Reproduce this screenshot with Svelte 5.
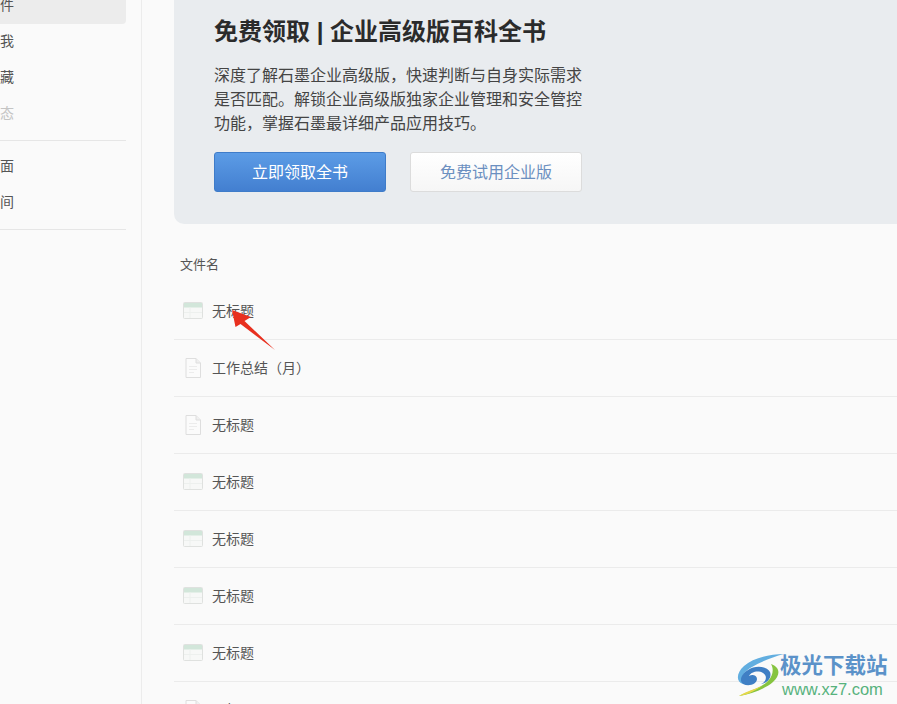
<script>
  const sideTop = [
    { t: '我的文件', active: true },
    { t: '共享给我' },
    { t: '我的收藏' },
    { t: '最新动态', muted: true }
  ];
  const sideBottom = ['我的桌面', '团队空间'];
  const rows = [
    { k: 'sheet', t: '无标题' },
    { k: 'doc', t: '工作总结（月）' },
    { k: 'doc', t: '无标题' },
    { k: 'sheet', t: '无标题' },
    { k: 'sheet', t: '无标题' },
    { k: 'sheet', t: '无标题' },
    { k: 'sheet', t: '无标题' },
    { k: 'doc', t: '无标题' }
  ];
</script>

<div class="page">
  <aside class="side">
    <div class="group first">
      {#each sideTop as s}
        <div class="item" class:active={s.active} class:muted={s.muted}><span>{s.t}</span></div>
      {/each}
    </div>
    <div class="group">
      {#each sideBottom as s}
        <div class="item"><span>{s}</span></div>
      {/each}
    </div>
  </aside>

  <main class="main">
    <section class="hero">
      <h1>免费领取 | 企业高级版百科全书</h1>
      <p>深度了解石墨企业高级版，快速判断与自身实际需求是否匹配。解锁企业高级版独家企业管理和安全管控功能，掌握石墨最详细产品应用技巧。</p>
      <div class="actions">
        <button class="btn primary">立即领取全书</button>
        <button class="btn ghost">免费试用企业版</button>
      </div>
    </section>

    <div class="head">文件名</div>
    <div class="list">
      {#each rows as r}
        <div class="row">
          {#if r.k === 'sheet'}
            <svg class="ico" width="20" height="17" viewBox="0 0 20 17">
              <rect x="0.5" y="0.5" width="19" height="16" rx="1" fill="#f7f8f7" stroke="#dfe1df"/>
              <rect x="1" y="1" width="18" height="4.5" fill="#d2e6da"/>
              <path d="M1 10.5H19M7 5.5V16" stroke="#edf0ee" fill="none"/>
            </svg>
          {:else}
            <svg class="ico doc" width="20" height="20" viewBox="0 0 20 20">
              <path d="M3 .5H13L17.5 5V19.5H3Z" fill="#fbfbfb" stroke="#dedede"/>
              <path d="M13 .5V5H17.5" fill="#f0f0f0" stroke="#dedede"/>
              <path d="M6 8.5H14M6 11.5H14M6 14.5H11" stroke="#ececec" fill="none"/>
            </svg>
          {/if}
          <span>{r.t}</span>
        </div>
      {/each}
    </div>
  </main>

  <svg class="arrow" width="50" height="46" viewBox="0 0 50 46">
    <path d="M2 1L21 8L14.5 12L45 41L10.5 15L5.5 18Z" fill="#e8301f"/>
  </svg>

  <div class="mark">
    <svg width="48" height="44" viewBox="0 0 48 44">
      <path d="M47 1C33 1 16 5 7 13C-1 20-1 29 6 31C3 25 7 18 15 14C25 8 36 4 47 1Z" fill="#62aee0"/>
      <path d="M6 31C12 34 20 31 20 26C20 22 15 21 12 23C14 19 21 17 26 20C31 23 29 29 24 31C31 30 35 24 33 19C30 13 18 12 11 17C4 21 2 28 6 31Z" fill="#3f7fc4"/>
      <path d="M34 11C43 14 44 22 36 29C28 36 14 41 2 43C12 38 24 35 31 28C36 23 37 16 34 11Z" fill="#86c440"/>
      <path d="M2 43C10 38 18 36 25 33C18 38 10 42 2 43Z" fill="#e6d84a"/>
    </svg>
    <div class="mark-text">
      <div class="mark-cn">极光下载站</div>
      <div class="mark-en">www.xz7.com</div>
    </div>
  </div>
</div>

<style>
  :global(body) {
    margin: 0;
    background: #fafafa;
  }
  .page {
    position: relative;
    display: flex;
    width: 897px;
    height: 704px;
    overflow: hidden;
    background: #fafafa;
    color: #333;
    font-family: "Liberation Sans", "Noto Sans CJK SC", sans-serif;
  }
  .side {
    flex: none;
    box-sizing: border-box;
    width: 142px;
    padding-right: 15px;
    border-right: 1px solid #ececec;
  }
  .group {
    padding: 8px 0;
    border-bottom: 1px solid #e6e6e6;
  }
  .group.first {
    margin-top: -20px;
  }
  .item {
    display: flex;
    justify-content: flex-end;
    box-sizing: border-box;
    height: 36px;
    line-height: 34px;
    padding-right: 112px;
    font-size: 14px;
    color: #555;
    white-space: nowrap;
    overflow: hidden;
  }
  .item span {
    flex: none;
  }
  .item.active {
    background: #ececec;
    border-radius: 0 4px 4px 0;
  }
  .item.muted {
    color: #c4c4c4;
  }
  .main {
    flex: 1;
    min-width: 0;
    padding-left: 32px;
  }
  .hero {
    box-sizing: border-box;
    height: 224px;
    padding: 16px 40px 0;
    background: #e9ecef;
    border-radius: 0 0 0 10px;
  }
  h1 {
    margin: 0;
    font-size: 24px;
    line-height: 32px;
    font-weight: 700;
    color: #2b2b2b;
  }
  p {
    margin: 16px 0 0;
    width: 370px;
    font-size: 16px;
    line-height: 24px;
    color: #444;
  }
  .actions {
    display: flex;
    gap: 24px;
    margin-top: 16px;
  }
  .btn {
    box-sizing: border-box;
    width: 172px;
    height: 40px;
    padding: 0 0 2px;
    border-radius: 3px;
    font: inherit;
    font-size: 16px;
  }
  .primary {
    color: #fff;
    border: 1px solid #3f7cc9;
    background: linear-gradient(#5c9ce6, #437fd0);
  }
  .ghost {
    color: #6b8fc0;
    border: 1px solid #dcdcdc;
    background: linear-gradient(#ffffff, #f6f6f6);
  }
  .head {
    height: 59px;
    padding-left: 6px;
    line-height: 82px;
    font-size: 13px;
    color: #555;
  }
  .row {
    display: flex;
    align-items: center;
    box-sizing: border-box;
    height: 57px;
    padding: 0 0 2px 9px;
    border-bottom: 1px solid #ebebeb;
    font-size: 14px;
    color: #555;
  }
  .ico {
    flex: none;
    margin-right: 9px;
  }
  .ico.doc {
    margin-top: 2px;
  }
  .arrow {
    position: absolute;
    left: 230px;
    top: 309px;
  }
  .mark {
    position: absolute;
    left: 737px;
    top: 653px;
    display: flex;
  }
  .mark-text {
    margin-left: -5px;
  }
  .mark-cn {
    font-size: 21.5px;
    line-height: 26px;
    font-weight: 700;
    color: #5b92c9;
    white-space: nowrap;
  }
  .mark-en {
    margin-top: 1px;
    padding-left: 2px;
    font-size: 16.5px;
    line-height: 18px;
    color: #57b27d;
    white-space: nowrap;
  }
</style>
